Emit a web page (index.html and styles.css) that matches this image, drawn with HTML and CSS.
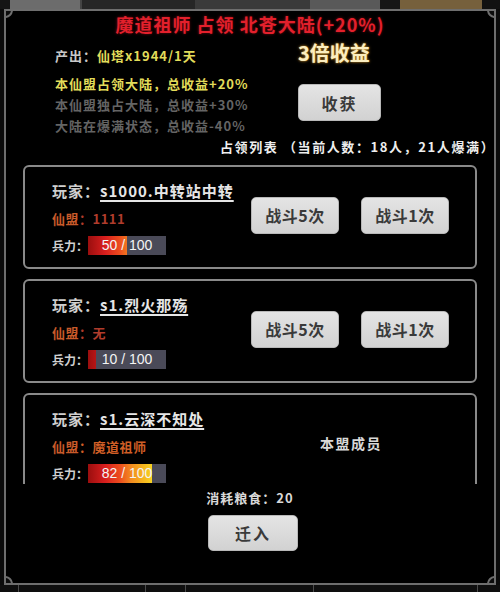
FILE: index.html
```html
<!DOCTYPE html>
<html lang="zh">
<head>
<meta charset="utf-8">
<title>占领</title>
<link rel="stylesheet" href="styles.css">
</head>
<body>
<div class="screen">
  <div class="topbar">
    <span class="tab t1"></span>
    <span class="tab t2"></span>
    <span class="tab t3"></span>
    <span class="tab t4"></span>
    <span class="tab t5"></span>
    <span class="tab t6"></span>
  </div>
  <div class="frame">
    <span class="corner tl"></span>
    <span class="corner tr"></span>
    <span class="corner bl"></span>
    <span class="corner br"></span>
    <h1 class="title">魔道祖师 占领 北苍大陆(+20%)</h1>
    <div class="info">
      <div class="info-left">
        <p class="line first"><span class="lbl">产出：</span><span class="yel">仙塔x1944/1天</span></p>
        <p class="line yel">本仙盟占领大陆，总收益+20%</p>
        <p class="line dim">本仙盟独占大陆，总收益+30%</p>
        <p class="line dim">大陆在爆满状态，总收益-40%</p>
      </div>
      <div class="info-right">
        <div class="bonus">3倍收益</div>
        <button class="btn harvest">收获</button>
      </div>
    </div>
    <div class="list-head">占领列表 （当前人数：18人，21人爆满）</div>
    <div class="list">
      <div class="card">
        <div class="card-info">
          <p class="player"><span class="plbl">玩家：</span><span class="pname">s1000.中转站中转</span></p>
          <p class="guild"><span class="glbl">仙盟</span><span class="gval">：1111</span></p>
          <div class="troops"><span class="tlbl">兵力：</span><div class="bar"><div class="fill" style="width:50%"></div><span class="bar-text">50 / 100</span></div></div>
        </div>
        <div class="card-actions">
          <button class="btn fight">战斗5次</button>
          <button class="btn fight">战斗1次</button>
        </div>
      </div>
      <div class="card">
        <div class="card-info">
          <p class="player"><span class="plbl">玩家：</span><span class="pname">s1.烈火那殇</span></p>
          <p class="guild"><span class="glbl">仙盟</span><span class="gval">：无</span></p>
          <div class="troops"><span class="tlbl">兵力：</span><div class="bar"><div class="fill" style="width:10%"></div><span class="bar-text">10 / 100</span></div></div>
        </div>
        <div class="card-actions">
          <button class="btn fight">战斗5次</button>
          <button class="btn fight">战斗1次</button>
        </div>
      </div>
      <div class="card">
        <div class="card-info">
          <p class="player"><span class="plbl">玩家：</span><span class="pname">s1.云深不知处</span></p>
          <p class="guild"><span class="glbl">仙盟</span><span class="gval own">：魔道祖师</span></p>
          <div class="troops"><span class="tlbl">兵力：</span><div class="bar"><div class="fill" style="width:82%"></div><span class="bar-text">82 / 100</span></div></div>
        </div>
        <div class="card-actions">
          <span class="member">本盟成员</span>
        </div>
      </div>
    </div>
    <div class="cost">消耗粮食：20</div>
    <button class="btn move">迁入</button>
  </div>
  <div class="bottombar">
    <span class="cell c1"></span>
    <span class="cell c2"></span>
    <span class="cell c3"></span>
    <span class="cell c4"></span>
    <span class="cell c5"></span>
  </div>
</div>
</body>
</html>
```

FILE: styles.css
```css
* { box-sizing: border-box; }
html, body { margin: 0; padding: 0; background: #000; }
body {
  font-family: "Noto Sans CJK SC", "Noto Sans", sans-serif;
  color: #d0d0d0;
}
p { margin: 0; }
.screen {
  width: 500px;
  height: 592px;
  overflow: hidden;
  background: #0b0b0b;
  display: flex;
  flex-direction: column;
}
.topbar {
  height: 9px;
  display: flex;
  background: #111;
}
.tab { height: 9px; display: block; }
.t1 { width: 10px; background: #151515; }
.t2 { width: 70px; background: #6c6c6c; }
.t3 { width: 115px; background: #262626; border-left: 2px solid #444; }
.t4 { width: 115px; background: #3a3a3a; }
.t5 { width: 90px; background: #595959; border-right: 20px solid #161616; }
.t6 { width: 82px; background: #76603c; }

.frame {
  position: relative;
  margin-left: 4px;
  width: 492px;
  height: 576px;
  border: 2px solid #6e6e6e;
  background: #000;
  overflow: hidden;
  display: flex;
  flex-direction: column;
}
.corner {
  position: absolute;
  width: 16px;
  height: 16px;
  border: 2px solid #6e6e6e;
  border-radius: 50%;
  background: #0b0b0b;
}
.tl { top: -9px; left: -9px; }
.tr { top: -9px; right: -9px; }
.bl { bottom: -9px; left: -9px; }
.br { bottom: -9px; right: -9px; }

.title {
  margin: 1px 0 0;
  height: 24px;
  line-height: 24px;
  text-align: center;
  font-size: 18px;
  font-weight: 700;
  letter-spacing: 1px;
  color: #e3202c;
  text-shadow: 0 0 3px rgba(200, 20, 30, 0.6);
}

.info {
  margin-top: 5px;
  display: grid;
  grid-template-columns: 243px auto;
  padding-left: 49px;
}
.info-left { padding-top: 5px; }
.line {
  font-size: 13px;
  letter-spacing: 1px;
  line-height: 21px;
  font-weight: 700;
  white-space: nowrap;
}
.line.first { line-height: 20px; margin-bottom: 7px; }
.lbl { color: #c8c8c8; }
.yel { color: #e2dc5a; }
.dim { color: #646464; }
.info-right { display: flex; flex-direction: column; align-items: flex-start; }
.bonus {
  height: 24px;
  line-height: 24px;
  font-size: 20px;
  font-weight: 700;
  color: #fbeec0;
  text-shadow: 0 0 3px #c8902a, 0 0 1px #a87020;
}
.btn {
  display: block;
  border: 1px solid #b8b8b8;
  border-radius: 5px;
  background: linear-gradient(#e4e4e4, #d2d2d2);
  color: #3a3a3a;
  font-family: "Noto Sans CJK SC", "Noto Sans", sans-serif;
  font-weight: 700;
  font-size: 16px;
  padding: 0;
}
.harvest {
  margin-top: 19px;
  width: 83px;
  height: 37px;
  letter-spacing: 2px;
}

.list-head {
  margin-top: 2px;
  height: 18px;
  line-height: 18px;
  padding-left: 214px;
  font-size: 13px;
  font-weight: 700;
  letter-spacing: 1.6px;
  color: #eeeeee;
  white-space: nowrap;
}

.list {
  margin-top: 4px;
  margin-left: 17px;
  width: 454px;
  height: 324px;
  padding-top: 5px;
  overflow: hidden;
  display: flex;
  flex-direction: column;
  gap: 10px;
}
.card {
  flex: none;
  height: 104px;
  border: 2px solid #8a8a8a;
  border-radius: 6px;
  display: flex;
}
.card-info {
  width: 224px;
  flex: none;
  padding: 14px 0 0 27px;
}
.player {
  height: 20px;
  line-height: 20px;
  font-size: 15px;
  font-weight: 700;
  letter-spacing: 1px;
  white-space: nowrap;
}
.plbl { color: #cfcfcf; }
.pname {
  color: #e6e6e6;
  text-decoration: underline;
  text-underline-offset: 3px;
  text-decoration-thickness: 1.5px;
}
.guild {
  margin-top: 8px;
  height: 20px;
  line-height: 20px;
  font-size: 13px;
  font-weight: 700;
  letter-spacing: 0.5px;
  white-space: nowrap;
}
.glbl { color: #c85a2a; }
.gval { color: #b03c2c; }
.gval.own { color: #cf5e26; }
.troops {
  margin-top: 7px;
  display: flex;
  align-items: center;
  height: 19px;
}
.tlbl {
  flex: none;
  width: 36px;
  white-space: nowrap;
  font-size: 12px;
  line-height: 19px;
  font-weight: 700;
  color: #cfcfcf;
}
.bar {
  flex: none;
  position: relative;
  width: 78px;
  height: 19px;
  background: #4a4a58;
}
.fill {
  height: 100%;
  background: linear-gradient(90deg, #9a0e0e 0%, #d81e1e 22%, #ec4a1e 40%, #f28a20 55%, #f6b81e 72%, #f8d824 84%);
  background-size: 78px 100%;
  background-repeat: no-repeat;
}
.bar-text {
  position: absolute;
  inset: 0;
  text-align: center;
  line-height: 19px;
  font-family: "Liberation Sans", Arial, sans-serif;
  font-size: 14px;
  color: #f4f4f4;
}
.card-actions {
  flex: 1;
  display: flex;
  align-items: center;
  gap: 22px;
  padding-left: 2px;
  padding-bottom: 4px;
}
.fight {
  width: 88px;
  height: 37px;
  letter-spacing: 0.5px;
}
.member {
  margin-left: 69px;
  font-size: 14px;
  font-weight: 700;
  letter-spacing: 1.5px;
  color: #d8d8d8;
}

.cost {
  margin-top: 4px;
  height: 20px;
  line-height: 20px;
  text-align: center;
  font-size: 13px;
  font-weight: 700;
  letter-spacing: 1px;
  color: #d8d8d8;
}
.move {
  margin: 7px 0 0 202px;
  width: 90px;
  height: 36px;
  letter-spacing: 2px;
}

.bottombar {
  height: 7px;
  display: flex;
  background: #0e0e0e;
}
.cell { display: block; height: 7px; border-left: 1px solid #4a4a4a; }
.c1 { width: 18px; border-left: none; }
.c2 { width: 127px; }
.c3 { width: 40px; }
.c4 { width: 128px; }
.c5 { border-right: 1px solid #4a4a4a; width: 165px; }
```
